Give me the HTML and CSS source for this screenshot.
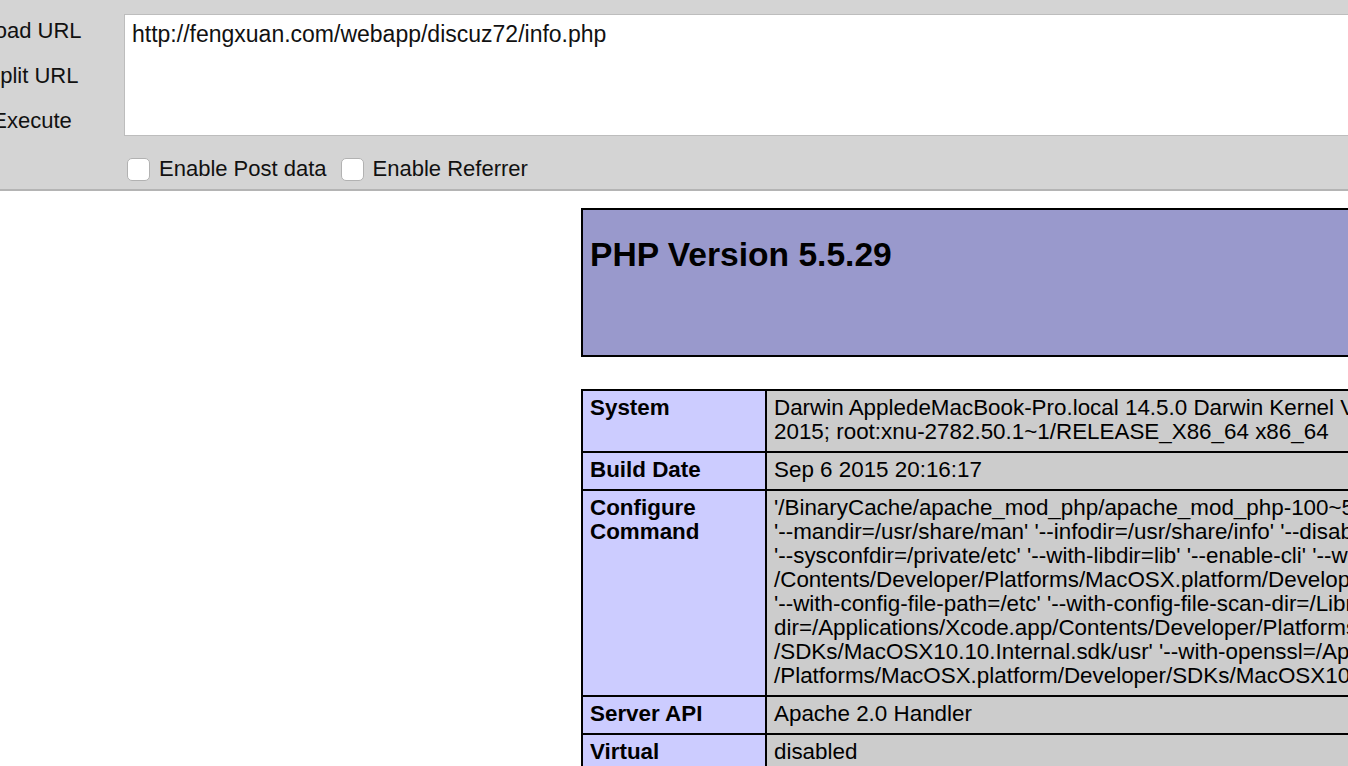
FILE: index.html
```html
<!DOCTYPE html>
<html>
<head>
<meta charset="utf-8">
<title>phpinfo()</title>
<link rel="stylesheet" href="styles.css">
</head>
<body>
<div class="hackbar">
  <div class="side">
    <span class="side-btn">Load URL</span>
    <span class="side-btn">Split URL</span>
    <span class="side-btn">Execute</span>
  </div>
  <div class="main">
    <div class="url-box">http://fengxuan.com/webapp/discuz72/info.php</div>
    <div class="options">
      <label class="opt"><span class="check"></span>Enable Post data</label>
      <label class="opt"><span class="check"></span>Enable Referrer</label>
    </div>
  </div>
</div>
<div class="center">
  <div class="head-box">
    <h1 class="title">PHP Version 5.5.29</h1>
  </div>
  <table class="info">
    <colgroup>
      <col class="col-e">
      <col class="col-v">
    </colgroup>
    <tr>
      <td class="e">System</td>
      <td class="v">Darwin AppledeMacBook-Pro.local 14.5.0 Darwin Kernel Version 14.5.0: Wed Jul 29 02:26:53 PDT<br>2015; root:xnu-2782.50.1~1/RELEASE_X86_64 x86_64</td>
    </tr>
    <tr>
      <td class="e">Build Date</td>
      <td class="v">Sep 6 2015 20:16:17</td>
    </tr>
    <tr>
      <td class="e">Configure<br>Command</td>
      <td class="v">'/BinaryCache/apache_mod_php/apache_mod_php-100~5/Objects/php/configure' '--prefix=/usr'<br>'--mandir=/usr/share/man' '--infodir=/usr/share/info' '--disable-dependency-tracking'<br>'--sysconfdir=/private/etc' '--with-libdir=lib' '--enable-cli' '--with-iconv=/Applications/Xcode.app<br>/Contents/Developer/Platforms/MacOSX.platform/Developer/SDKs/MacOSX10.10.Internal.sdk/usr'<br>'--with-config-file-path=/etc' '--with-config-file-scan-dir=/Library/Server/Web/Config/php' '--with-libxml-<br>dir=/Applications/Xcode.app/Contents/Developer/Platforms/MacOSX.platform/Developer<br>/SDKs/MacOSX10.10.Internal.sdk/usr' '--with-openssl=/Applications/Xcode.app/Contents/Developer<br>/Platforms/MacOSX.platform/Developer/SDKs/MacOSX10.10.Internal.sdk/usr'</td>
    </tr>
    <tr>
      <td class="e">Server API</td>
      <td class="v">Apache 2.0 Handler</td>
    </tr>
    <tr>
      <td class="e">Virtual<br>Directory Support</td>
      <td class="v">disabled</td>
    </tr>
  </table>
</div>
</body>
</html>
```
FILE: styles.css
```css
html, body {
  margin: 0;
  padding: 0;
  overflow: hidden;
  background: #fff;
  width: 1348px;
  height: 766px;
}
body {
  font-family: "Liberation Sans", Arial, Helvetica, sans-serif;
  color: #000;
}
.hackbar {
  display: flex;
  background: #d4d4d4;
  height: 189px;
  border-bottom: 2px solid #b4b4b4;
  font-size: 22px;
}
.side {
  width: 64px;
  flex: none;
  display: flex;
  flex-direction: column;
  align-items: center;
  padding-top: 8px;
}
.side-btn {
  display: block;
  line-height: 45px;
  white-space: nowrap;
  flex: none;
  color: #111;
}
.main {
  margin-left: 60px;
  padding-top: 14px;
  flex: 1;
  min-width: 0;
}
.url-box {
  background: #fff;
  border: 1px solid #bdbdbd;
  border-right: none;
  padding: 6px 7px 0;
  line-height: 26px;
  font-size: 23px;
  box-sizing: border-box;
  height: 122px;
  margin-right: -10px;
  color: #111;
}
.options {
  display: flex;
  align-items: center;
  margin-top: 21px;
}
.opt {
  display: flex;
  align-items: center;
  margin-left: 3px;
  margin-right: 11px;
  line-height: 24px;
  color: #111;
  white-space: nowrap;
}
.check {
  width: 21px;
  height: 21px;
  border: 1px solid #b2b2b2;
  border-radius: 5px;
  background: #fff;
  margin-right: 9px;
  flex: none;
}
.center {
  margin-left: 581px;
  margin-top: 17px;
  font-size: 22.4px;
}
.head-box {
  width: 1000px;
  height: 145px;
  background: #9999cc;
  border: 2px solid #000;
}
.title {
  margin: 26px 0 0 7px;
  font-size: 33.6px;
  font-weight: bold;
  line-height: 38px;
}
.info {
  margin-top: 32px;
  border-collapse: collapse;
  border: 2px solid #000;
  width: 1000px;
  table-layout: fixed;
}
.col-e {
  width: 184px;
}
.col-v {
  width: 816px;
}
.info td {
  border: 2px solid #000;
  padding: 5px 6px 7px 7px;
  line-height: 24px;
  vertical-align: top;
}
.e {
  background: #ccccff;
  font-weight: bold;
}
.v {
  background: #cccccc;
  white-space: nowrap;
  overflow: hidden;
}
```
